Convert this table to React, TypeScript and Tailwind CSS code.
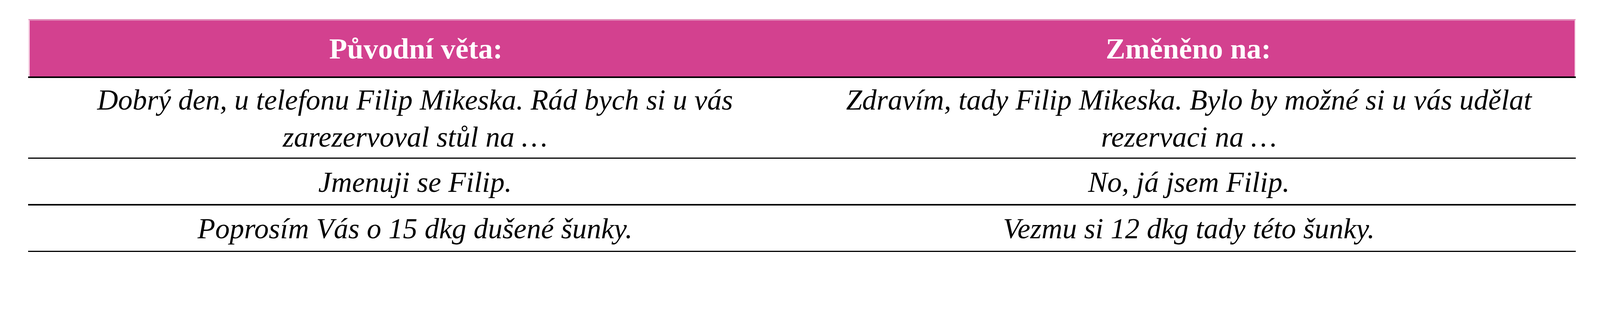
import React from 'react';

interface Row {
  original: React.ReactNode;
  changed: React.ReactNode;
  height: string;
}

const rows: Row[] = [
  {
    original: (
      <>
        Dobrý den, u telefonu Filip Mikeska. Rád bych si u vás
        <br />
        zarezervoval stůl na …
      </>
    ),
    changed: (
      <>
        Zdravím, tady Filip Mikeska. Bylo by možné si u vás udělat
        <br />
        rezervaci na …
      </>
    ),
    height: 'h-[204px]',
  },
  { original: 'Jmenuji se Filip.', changed: 'No, já jsem Filip.', height: 'h-[116px]' },
  {
    original: 'Poprosím Vás o 15 dkg dušené šunky.',
    changed: 'Vezmu si 12 dkg tady této šunky.',
    height: 'h-[116px]',
  },
];

export default function App() {
  return (
    <div className="w-full bg-white pt-[49px] pb-[20px] pl-[72px] pr-[62px] font-['Liberation_Serif','DejaVu_Serif',serif]">
      <div className="w-full">
        {/* Header */}
        <div className="grid grid-cols-2 h-[147px] bg-[#d3418f] border-t-[4px] border-t-[#e08ab8] border-l-[4px] border-l-[#f6d8e7] border-r-[3px] border-r-[#f6d8e7] text-white font-bold text-[75px] leading-none">
          <div className="flex items-center justify-center">Původní věta:</div>
          <div className="flex items-center justify-center">Změněno na:</div>
        </div>
        <div className="h-[3.5px] bg-black" />

        {/* Body rows */}
        {rows.map((row, i) => (
          <div key={i}>
            <div className={`grid grid-cols-2 ${row.height} italic text-black text-[74px] leading-[95px] text-center`}>
              <div className="flex items-center justify-center pt-[4px]">
                <p>{row.original}</p>
              </div>
              <div className="flex items-center justify-center pt-[4px]">
                <p>{row.changed}</p>
              </div>
            </div>
            <div className="h-[3.5px] bg-black" />
          </div>
        ))}
      </div>
    </div>
  );
}
